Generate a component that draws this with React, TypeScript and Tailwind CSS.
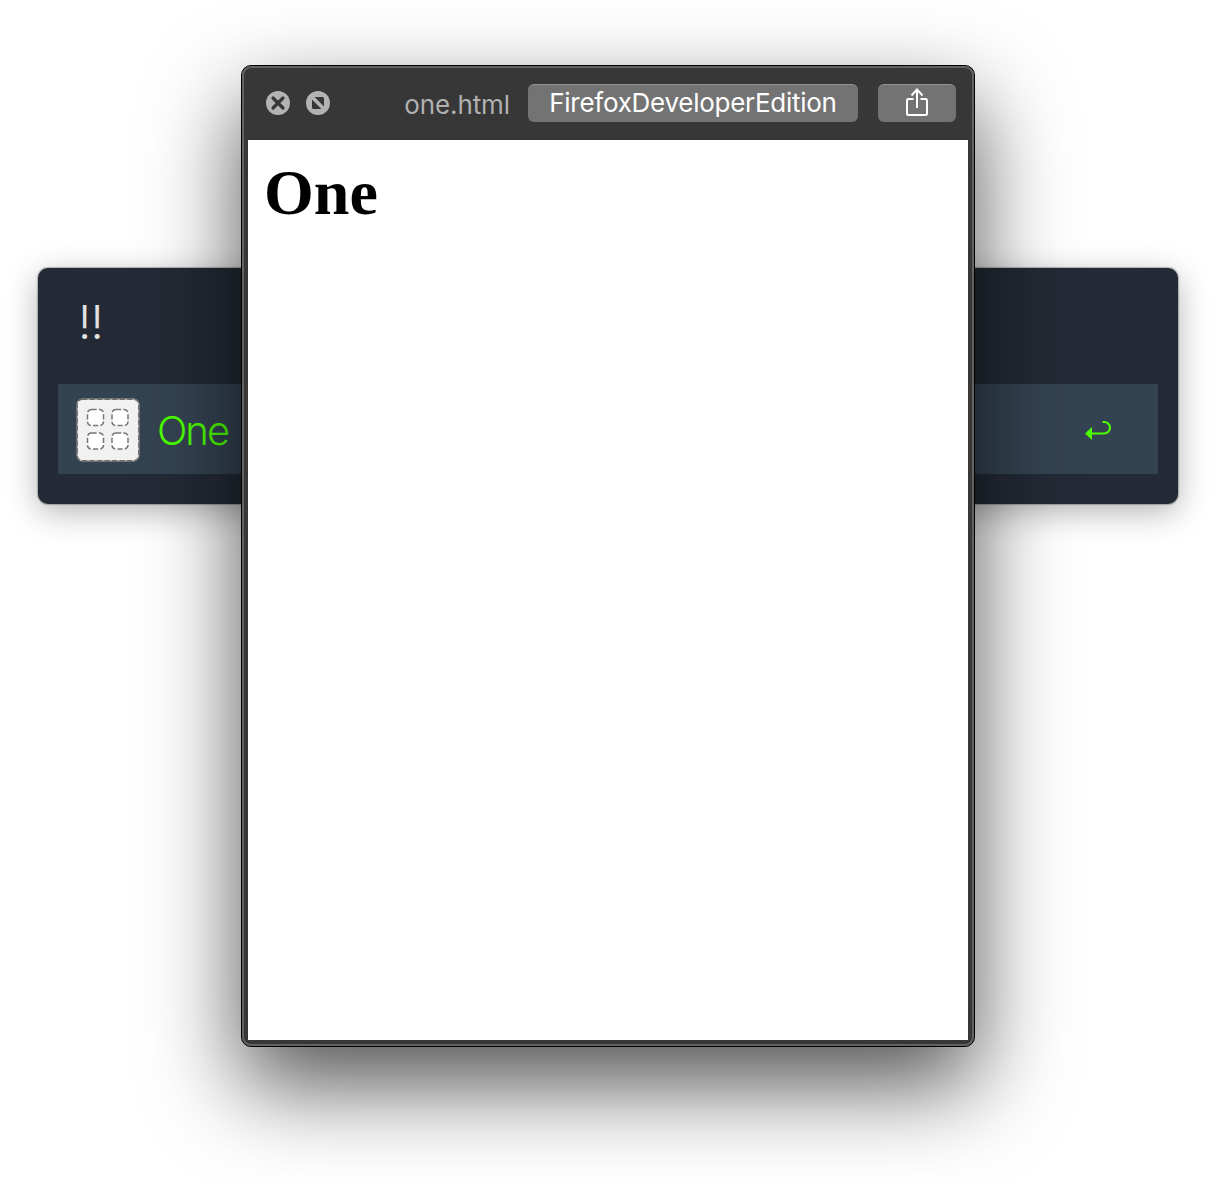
function CloseIcon() {
  return (
    <svg className="size-6" viewBox="0 0 24 24">
      <circle cx="12" cy="12" r="12" fill="#b3b3b3" />
      <path d="M7 7l10 10M17 7L7 17" stroke="#373737" strokeWidth="3.2" strokeLinecap="round" />
    </svg>
  );
}

function ExpandIcon() {
  return (
    <svg className="size-6" viewBox="0 0 24 24">
      <circle cx="12" cy="12" r="12" fill="#b3b3b3" />
      <path d="M8.6 6H16.5Q18 6 18 7.500V15.400ZM6 8.600V16.500Q6 18 7.500 18H15.400Z" fill="#373737" />
    </svg>
  );
}

function ShareIcon() {
  return (
    <svg className="-mt-0.5 h-[30px] w-6" viewBox="0 0 24 30" fill="none" stroke="#fff" strokeWidth="2">
      <path d="M8.500 11H3.500Q2 11 2 12.500V25.500Q2 27 3.500 27H20.500Q22 27 22 25.500V12.500Q22 11 20.500 11H15.500" />
      <path d="M12 20V2M6.500 7.500L12 1.500L17.500 7.500" />
    </svg>
  );
}

function AppIcon() {
  const cells = [
    [11.500, 11.500],
    [36, 11.500],
    [11.500, 35],
    [36, 35],
  ];
  return (
    <svg className="mt-0.5 size-16" viewBox="0 0 64 64">
      <rect x="1.250" y="1.250" width="61.500" height="61.500" rx="5" fill="#f1f1f1" stroke="#b5b1ae" strokeWidth="1.300" />
      <rect x="1.250" y="1.250" width="61.500" height="61.500" rx="5" fill="none" stroke="#6f6b6a" strokeWidth="1.300" strokeDasharray="5 2.500" />
      {cells.map(([x, y]) => (
        <rect key={`${x}-${y}`} x={x} y={y} width="16" height="16" rx="4" fill="#fff" stroke="#777" strokeWidth="1.500" strokeDasharray="5.200 2.200" />
      ))}
    </svg>
  );
}

function ReturnIcon() {
  return (
    <svg className="mt-1 h-6 w-7" viewBox="0 0 28 24" fill="none">
      <path d="M18.500 3H20.250A5.750 5.750 0 0 1 20.250 14.500H6" stroke="#4cff00" strokeWidth="2.200" />
      <path d="M1 14.500L8 8V21Z" fill="#4cff00" />
    </svg>
  );
}

function Launcher() {
  return (
    <section className="h-[236px] w-[1140px] rounded-[10px] bg-[#232a35] px-5 shadow-[0_0_1px_1px_rgba(0,0,0,0.25),0_8px_32px_rgba(0,0,0,0.3)]">
      <div className="flex h-[116px] items-center pl-5 text-[47px] font-light leading-none tracking-[-0.8px] text-[#e2e2e3]">
        <span className="-mt-[9px]">!!</span>
      </div>
      <div className="flex h-[90px] items-center bg-[#344351] pl-[18px] pr-[46px] text-[#4cff00]">
        <AppIcon />
        <span className="ml-[17px] mt-1 flex-1 text-[40px] font-light leading-none tracking-[-2px]">One</span>
        <ReturnIcon />
      </div>
    </section>
  );
}

function PreviewWindow() {
  return (
    <section className="absolute left-[241px] top-[65px] h-[982px] w-[734px] rounded-[10px] border border-black bg-[#373737] shadow-[0_38px_90px_rgba(0,0,0,0.68)]">
      <div className="h-full rounded-[9px] border-2 border-[#626262] px-1 pb-1 pt-0">
        <header className="-mx-1 flex h-[72px] items-center pb-0.5 pl-[22px] pr-4">
          <CloseIcon />
          <span className="ml-4"><ExpandIcon /></span>
          <span className="ml-auto mt-1 text-[26px] leading-none tracking-[-0.1px] text-[#b1b1b1]">one.html</span>
          <button className="ml-[18px] h-[38px] w-[330px] rounded-md border-t border-[#939393] bg-[#737373] pb-0.5 text-[26px] leading-none tracking-[-0.27px] text-white">
            FirefoxDeveloperEdition
          </button>
          <button className="ml-5 flex h-[38px] w-[78px] items-center justify-center rounded-md border-t border-[#939393] bg-[#737373]">
            <ShareIcon />
          </button>
        </header>
        <main className="h-[900px] bg-white pl-4 pt-4 text-black">
          <h1 className="font-['Liberation_Serif',serif] text-[64px] font-bold leading-[74px]">One</h1>
        </main>
      </div>
    </section>
  );
}

export default function App() {
  return (
    <div className="relative h-[1184px] w-[1216px] overflow-hidden bg-white pl-[38px] pt-[268px] font-['Inter',sans-serif]">
      <Launcher />
      <PreviewWindow />
    </div>
  );
}
